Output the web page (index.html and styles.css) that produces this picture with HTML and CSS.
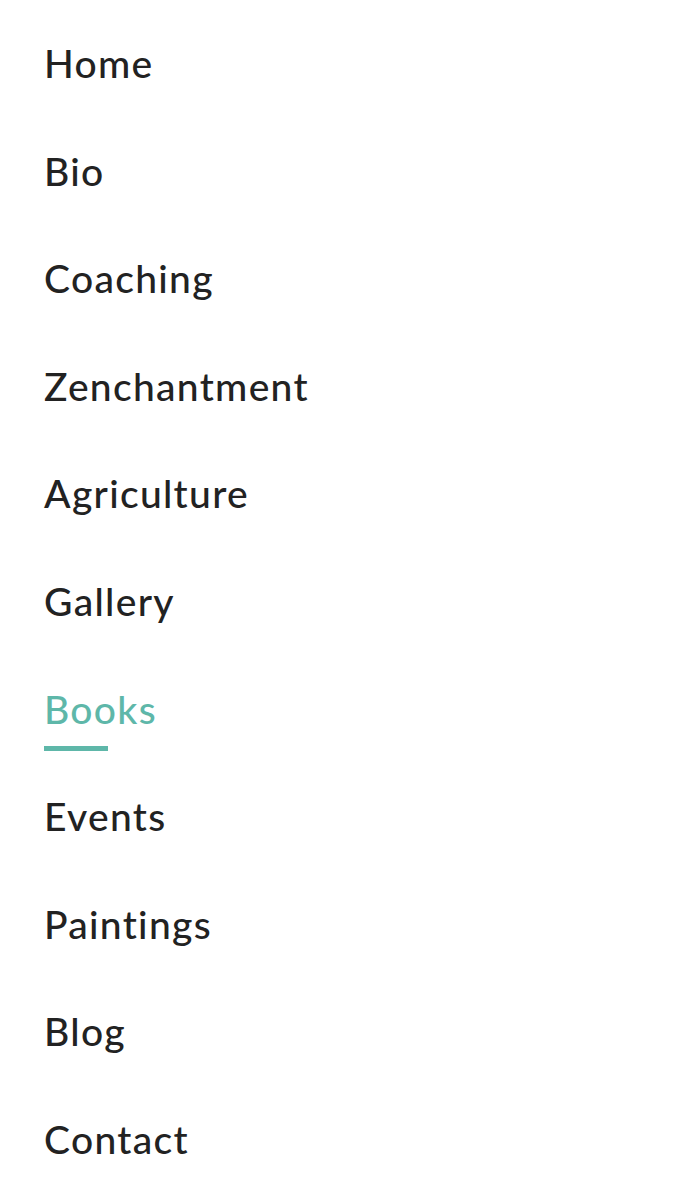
FILE: index.html
```html
<!DOCTYPE html>
<html>
<head>
  <title>Menu</title>
  <link rel="stylesheet" href="styles.css">
</head>
<body>
  <nav class="menu">
    <ul class="menu-list">
      <li class="menu-item"><a href="#">Home</a></li>
      <li class="menu-item"><a href="#">Bio</a></li>
      <li class="menu-item"><a href="#">Coaching</a></li>
      <li class="menu-item"><a href="#">Zenchantment</a></li>
      <li class="menu-item"><a href="#">Agriculture</a></li>
      <li class="menu-item"><a href="#">Gallery</a></li>
      <li class="menu-item active"><a href="#">Books</a></li>
      <li class="menu-item"><a href="#">Events</a></li>
      <li class="menu-item"><a href="#">Paintings</a></li>
      <li class="menu-item"><a href="#">Blog</a></li>
      <li class="menu-item"><a href="#">Contact</a></li>
    </ul>
  </nav>
</body>
</html>
```

FILE: styles.css
```css
body {
  margin: 0;
  padding: 0;
  background-color: #fff;
  font-family: Lato, "Open Sans", sans-serif;
}

.menu {
  padding: 42px 44px 0;
}

.menu-list {
  list-style-type: none;
  margin: 0;
  padding: 0;
  display: flex;
  flex-direction: column;
  gap: 64.6px;
}

.menu-item {
  font-size: 39px;
  font-weight: 500;
  line-height: 43px;
  letter-spacing: 1.3px;
}

.menu-item a {
  position: relative;
  display: inline-block;
  color: #222;
  text-decoration: none;
}

.menu-item.active a {
  color: #5eb7a9;
}

/* underline under the current page */
.menu-item.active a::after {
  content: "";
  position: absolute;
  left: 0;
  top: 58px;
  width: 64px;
  height: 5px;
  background-color: #5eb7a9;
}
```
